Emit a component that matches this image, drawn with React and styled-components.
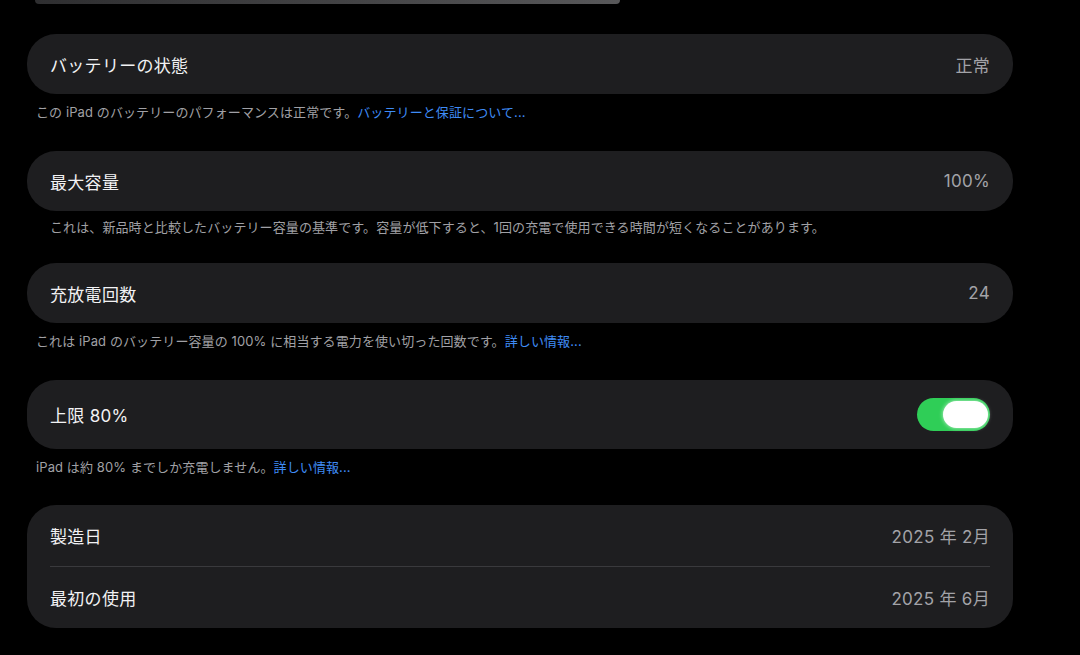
import { createGlobalStyle, styled } from "styled-components";

const GlobalStyle = createGlobalStyle`
  html, body {
    margin: 0;
    padding: 0;
    background: #000;
  }
  body {
    font-family: "Inter", "Noto Sans CJK JP", "Noto Sans", sans-serif;
    -webkit-font-smoothing: antialiased;
  }
`;

const Page = styled.div`
  width: 1080px;
  height: 655px;
  overflow: hidden;
  box-sizing: border-box;
  padding: 0 67px 0 27px;
  display: flex;
  flex-direction: column;
`;

// bottom edge of the chart panel scrolled off the top
const TopSliver = styled.div`
  flex-shrink: 0;
  margin-left: 8px;
  width: 585px;
  height: 4px;
  background: linear-gradient(90deg, #2e2e30, #444446 55%, #58585a);
  border-radius: 0 0 16px 16px;
  margin-bottom: 30px;
`;

const Section = styled.section`
  flex-shrink: 0;
  display: flex;
  flex-direction: column;
  margin-bottom: ${props => props.$bottom ?? 30}px;
`;

const Card = styled.div`
  background: #1e1e20;
  border-radius: 29px;
  display: flex;
  flex-direction: column;
`;

const Row = styled.div`
  height: ${props => props.$height ?? 60}px;
  padding: 0 23px;
  display: flex;
  align-items: center;
  justify-content: space-between;
`;

const Label = styled.div`
  font-size: 17px;
  letter-spacing: 0.3px;
  color: #f2f2f4;
`;

const Value = styled.div`
  font-size: 17px;
  letter-spacing: 0.3px;
  color: #a3a3a8;
`;

const Divider = styled.div`
  height: 1px;
  margin: 0 23px;
  background: #3a3a3d;
`;

const Footer = styled.p`
  margin: ${props => props.$top ?? 9}px 0 0;
  padding-left: ${props => props.$indent ?? 9}px;
  font-size: 13px;
  line-height: 18px;
  color: #a0a0a5;
  letter-spacing: 0.1px;
`;

const Link = styled.a`
  color: #3f8cf6;
  text-decoration: none;
  margin-left: ${props => props.$gap ?? 0}px;
`;

const Toggle = styled.div`
  width: 73px;
  height: 33px;
  border-radius: 17px;
  background: #2fce57;
  box-sizing: border-box;
  padding: 3px 2px;
  display: flex;
  justify-content: ${props => (props.$on ? "flex-end" : "flex-start")};
`;

const Knob = styled.div`
  width: 45px;
  height: 27px;
  border-radius: 14px;
  background: #fff;
  box-shadow: 0 0 4px rgba(255, 255, 255, 0.7);
`;

export default function App() {
  return (
    <>
      <GlobalStyle />
      <Page>
        <TopSliver />

        <Section>
          <Card>
            <Row>
              <Label>バッテリーの状態</Label>
              <Value>正常</Value>
            </Row>
          </Card>
          <Footer>
            この iPad のバッテリーのパフォーマンスは正常です。
            <Link>バッテリーと保証について...</Link>
          </Footer>
        </Section>

        <Section $bottom={27}>
          <Card>
            <Row>
              <Label>最大容量</Label>
              <Value>100%</Value>
            </Row>
          </Card>
          <Footer $top={7} $indent={23}>
            これは、新品時と比較したバッテリー容量の基準です。容量が低下すると、1回の充電で使用できる時間が短くなることがあります。
          </Footer>
        </Section>

        <Section>
          <Card>
            <Row>
              <Label>充放電回数</Label>
              <Value>24</Value>
            </Row>
          </Card>
          <Footer>
            これは iPad のバッテリー容量の 100% に相当する電力を使い切った回数です。
            <Link>詳しい情報...</Link>
          </Footer>
        </Section>

        <Section $bottom={29}>
          <Card>
            <Row $height={69}>
              <Label>上限 80%</Label>
              <Toggle $on>
                <Knob />
              </Toggle>
            </Row>
          </Card>
          <Footer>
            iPad は約 80% までしか充電しません。
            <Link>詳しい情報...</Link>
          </Footer>
        </Section>

        <Section>
          <Card>
            <Row $height={61}>
              <Label>製造日</Label>
              <Value>2025 年 2月</Value>
            </Row>
            <Divider />
            <Row $height={61}>
              <Label>最初の使用</Label>
              <Value>2025 年 6月</Value>
            </Row>
          </Card>
        </Section>
      </Page>
    </>
  );
}
